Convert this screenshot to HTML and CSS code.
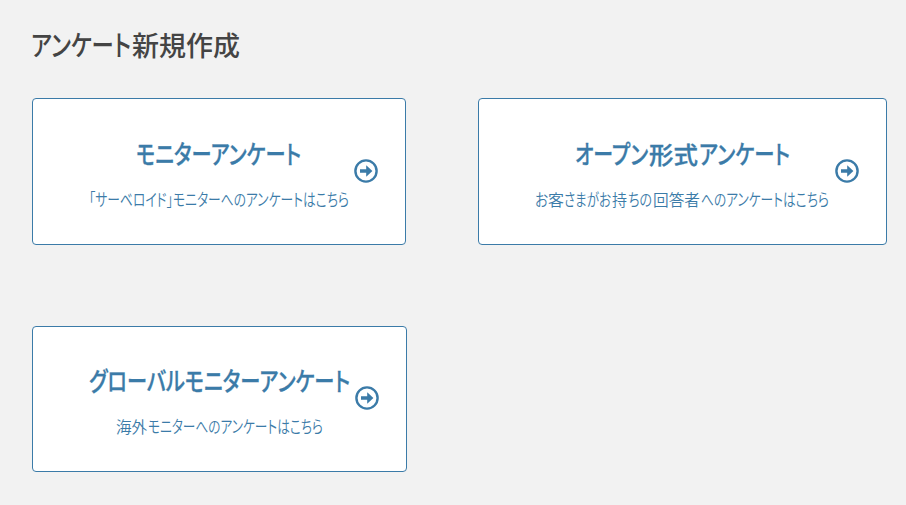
FILE: index.html
```html
<!DOCTYPE html>
<html lang="ja">
<head>
  <meta charset="utf-8">
  <title>アンケート新規作成</title>
  <link rel="stylesheet" href="styles.css">
</head>
<body>
  <h1 class="heading">
    <svg class="line" width="209" height="36">
      <text y="28"><tspan class="kana" x="-1" textLength="100" lengthAdjust="spacingAndGlyphs">アンケート</tspan><tspan x="100" textLength="108" lengthAdjust="spacingAndGlyphs">新規作成</tspan></text>
    </svg>
  </h1>
  <div class="cards">
    <a class="card">
      <div class="card-text">
        <svg class="line title" width="166" height="30">
          <text class="kana" y="24" textLength="165" lengthAdjust="spacingAndGlyphs">モニターアンケート</text>
        </svg>
        <svg class="line note" width="260" height="22">
          <text class="kana" y="18" textLength="260" lengthAdjust="spacingAndGlyphs">「サーベロイド」モニターへのアンケートはこちら</text>
        </svg>
      </div>
      <svg class="arrow" viewBox="0 0 24 24"><circle cx="12" cy="12" r="10.6"/><path d="M6 10.3h6.2V6.3l6.2 5.7-6.2 5.7v-4H6z"/></svg>
    </a>
    <a class="card">
      <div class="card-text">
        <svg class="line title" width="216" height="30">
          <text y="24"><tspan class="kana" x="0" textLength="73" lengthAdjust="spacingAndGlyphs">オープン</tspan><tspan x="74" textLength="49" lengthAdjust="spacingAndGlyphs">形式</tspan><tspan class="kana" x="124" textLength="91" lengthAdjust="spacingAndGlyphs">アンケート</tspan></text>
        </svg>
        <svg class="line note" width="295" height="22">
          <text y="18"><tspan class="kana" x="0" textLength="13" lengthAdjust="spacingAndGlyphs">お</tspan><tspan x="13" textLength="16" lengthAdjust="spacingAndGlyphs">客</tspan><tspan class="kana" x="29" textLength="47" lengthAdjust="spacingAndGlyphs">さまがお</tspan><tspan x="77" textLength="15" lengthAdjust="spacingAndGlyphs">持</tspan><tspan class="kana" x="93" textLength="24" lengthAdjust="spacingAndGlyphs">ちの</tspan><tspan x="118" textLength="47" lengthAdjust="spacingAndGlyphs">回答者</tspan><tspan class="kana" x="166" textLength="128" lengthAdjust="spacingAndGlyphs">へのアンケートはこちら</tspan></text>
        </svg>
      </div>
      <svg class="arrow" viewBox="0 0 24 24"><circle cx="12" cy="12" r="10.6"/><path d="M6 10.3h6.2V6.3l6.2 5.7-6.2 5.7v-4H6z"/></svg>
    </a>
    <a class="card card-global">
      <div class="card-text">
        <svg class="line title" width="261" height="30">
          <text class="kana" y="24" textLength="261" lengthAdjust="spacingAndGlyphs">グローバルモニターアンケート</text>
        </svg>
        <svg class="line note" width="207" height="22">
          <text y="18"><tspan x="0" textLength="31" lengthAdjust="spacingAndGlyphs">海外</tspan><tspan class="kana" x="32" textLength="175" lengthAdjust="spacingAndGlyphs">モニターへのアンケートはこちら</tspan></text>
        </svg>
      </div>
      <svg class="arrow" viewBox="0 0 24 24"><circle cx="12" cy="12" r="10.6"/><path d="M6 10.3h6.2V6.3l6.2 5.7-6.2 5.7v-4H6z"/></svg>
    </a>
  </div>
</body>
</html>
```
FILE: styles.css
```css
body {
    margin: 0;
    padding: 28px 0 0 32px;
    background: #f2f2f2;
    color: #444;
    font-family: "Noto Sans CJK JP", sans-serif;
}
.heading {
    margin: 0 0 34px;
    font-size: 27px;
    font-weight: 500;
}
.line {
    display: block;
    overflow: visible;
    fill: currentColor;
    font-feature-settings: "palt";
}
.kana {
    font-size: 1.07em;
}
.cards {
    display: grid;
    grid-template-columns: max-content max-content;
    justify-items: start;
    column-gap: 71px;
    row-gap: 81px;
}
.card {
    box-sizing: border-box;
    height: 147px;
    display: flex;
    align-items: center;
    padding: 0 27.5px 0 56px;
    border: 1px solid #3b7ba8;
    border-radius: 4px;
    background: #fff;
    color: #3b7ba8;
}
.card-global {
    height: 146px;
    padding-bottom: 1px;
}
.card-text {
    display: flex;
    flex-direction: column;
    align-items: center;
    padding-top: 7px;
}
.title {
    font-size: 24px;
    font-weight: 500;
    stroke: currentColor;
    stroke-width: .3px;
}
.note {
    margin-top: 18px;
    font-size: 16px;
    font-weight: 350;
}
.arrow {
    width: 24px;
    height: 24px;
    margin: -1px 0 0 4.5px;
    fill: #3b7ba8;
}
.arrow circle {
    fill: none;
    stroke: #3b7ba8;
    stroke-width: 2.4;
}
```
